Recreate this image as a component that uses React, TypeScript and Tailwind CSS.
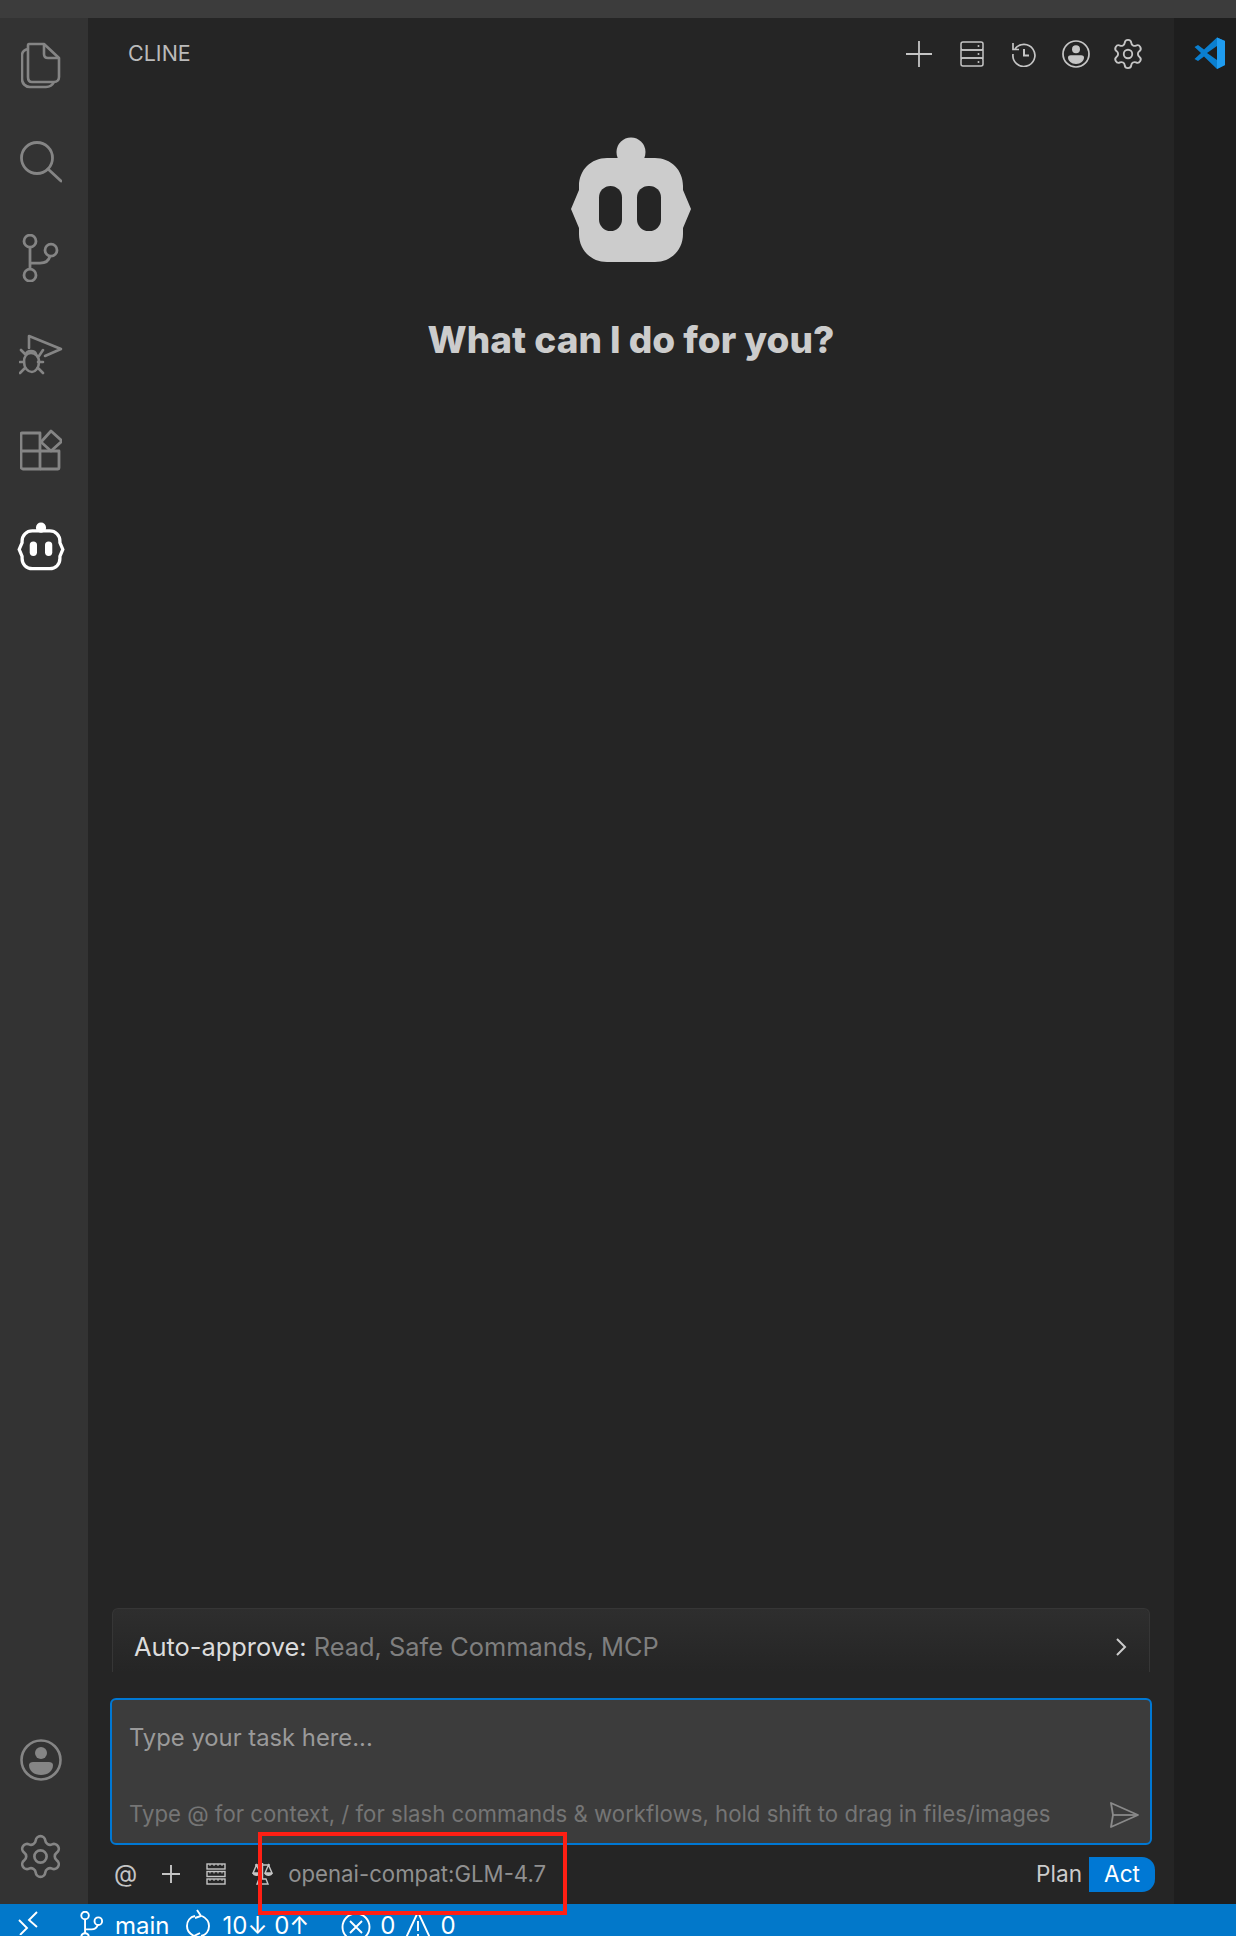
import React from 'react';
import { Settings } from 'lucide-react';

const BOT_PATH =
  'M36 21H84C100 21 112 33 112 49V53L120 72L112 91V97C112 113 100 125 84 125H36C20 125 8 113 8 97V91L0 72L8 53V49C8 33 20 21 36 21Z';

function BotSolid() {
  return (
    <svg width="120" height="125" viewBox="0 0 120 125" className="block">
      <circle cx="60" cy="15" r="14.5" fill="#cccccc" />
      <path d={BOT_PATH} fill="#cccccc" />
      <rect x="28" y="49" width="23" height="45" rx="11.5" fill="#252525" />
      <rect x="66" y="49" width="24" height="45" rx="11.5" fill="#252525" />
    </svg>
  );
}

function BotOutline() {
  return (
    <svg width="48" height="50" viewBox="-6 -2 132 129" className="block">
      <circle cx="60" cy="12" r="14" fill="#ffffff" />
      <path d={BOT_PATH} fill="none" stroke="#ffffff" strokeWidth="9" />
      <rect x="29" y="50" width="20" height="40" rx="10" fill="#ffffff" />
      <rect x="71" y="50" width="20" height="40" rx="10" fill="#ffffff" />
    </svg>
  );
}

function FilesIcon() {
  return (
    <svg width="40" height="50" viewBox="0 0 40 50" fill="none" stroke="#858585" strokeWidth="2.6" className="block">
      <path d="M8 3H23L38 17V36C38 39 36 41 33 41H11C8 41 7 39 7 36V5C7 4 7 3 8 3Z" strokeLinejoin="round" />
      <path d="M23 3V13C23 16 25 17 27 17H38" />
      <path d="M7 8C3 9 1 11 1 14V38C1 42 4 46 9 46H25C28 46 31 45 33 41" />
    </svg>
  );
}

function SearchIcon() {
  return (
    <svg width="42" height="42" viewBox="0 0 42 42" fill="none" stroke="#858585" strokeWidth="2.8" strokeLinecap="round" className="block">
      <ellipse cx="17" cy="17" rx="15.5" ry="15.5" />
      <path d="M28 28L41 40" />
    </svg>
  );
}

function BranchIcon({ color = '#858585', size = 38, sw = 2.8 }: { color?: string; size?: number; sw?: number }) {
  return (
    <svg width={size} height={size * 1.27} viewBox="0 0 38 48" fill="none" stroke={color} strokeWidth={sw} className="block">
      <circle cx="8" cy="7" r="6" />
      <circle cx="8" cy="41" r="6" />
      <circle cx="29" cy="16" r="6" />
      <path d="M8 13V35" />
      <path d="M8 29H18C24 29 27 26 28 22" />
    </svg>
  );
}

function DebugIcon() {
  return (
    <svg width="44" height="42" viewBox="0 0 44 42" fill="none" stroke="#858585" strokeWidth="2.6" strokeLinecap="round" strokeLinejoin="round" className="block">
      <path d="M10 15V3L42 16L26 23" />
      <path d="M11 20C15 20 19 23 19 29C19 35 15 39 12 39C8 39 4 35 4 29C4 23 7 20 11 20Z" transform="translate(1 0)" />
      <path d="M7 21C8 17 16 17 17 21" />
      <path d="M2 17L6 21M24 17L20 23M1 29H5M19 29H24M1 40L6 35M24 40L19 35" />
    </svg>
  );
}

function ExtensionsIcon() {
  return (
    <svg width="42" height="42" viewBox="0 0 42 42" fill="none" stroke="#858585" strokeWidth="2.8" strokeLinejoin="round" className="block">
      <path d="M2 4H20V40H3C2 40 1 39 1 38V5C1 4 2 4 2 4Z" />
      <path d="M1 22H39V39C39 40 38 40 38 40H20" />
      <path d="M21 13L31 2L42 12L31 22Z" />
    </svg>
  );
}

function AccountIcon({ color, size }: { color: string; size: number }) {
  return (
    <svg width={size} height={size} viewBox="0 0 42 42" className="block">
      <circle cx="21" cy="21" r="19.5" fill="none" stroke={color} strokeWidth="2.6" />
      <circle cx="21" cy="14" r="6" fill={color} />
      <path d="M9 26C9 24 11 23 13 23H29C31 23 33 24 33 26C33 32 28 36 21 36C14 36 9 32 9 26Z" fill={color} />
    </svg>
  );
}

function ServerIcon() {
  return (
    <svg width="24" height="26" viewBox="0 0 24 26" fill="none" stroke="#c5c5c5" strokeWidth="1.5" className="block">
      <rect x="1" y="1" width="22" height="8" rx="2" />
      <rect x="1" y="9" width="22" height="8" rx="0" />
      <rect x="1" y="17" width="22" height="8" rx="2" />
      <circle cx="18.5" cy="5" r="1" fill="#c5c5c5" stroke="none" />
      <circle cx="18.5" cy="13" r="1" fill="#c5c5c5" stroke="none" />
      <circle cx="18.5" cy="21" r="1" fill="#c5c5c5" stroke="none" />
    </svg>
  );
}

function HistoryIcon() {
  return (
    <svg width="26" height="26" viewBox="0 0 26 26" fill="none" stroke="#c5c5c5" strokeWidth="1.7" className="block">
      <path d="M4 8A11 11 0 1 1 2 13" />
      <path d="M2 2V8.5H8" />
      <path d="M13 8V14.5H18" strokeWidth="2" />
    </svg>
  );
}

function VsCodeLogo() {
  return (
    <svg width="32" height="32" viewBox="0 0 32 32" className="block">
      <path d="M23 0.5L31 4V28L23 32L10 19.5L4 24L0.5 22L7 16L0.5 10L4 8L10 12.5Z" fill="#0a7fd0" />
      <path d="M23 0.5L31 4V28L23 32Z" fill="#1f9cf0" />
      <path d="M23 9L13 16L23 23Z" fill="#1e1e1e" />
    </svg>
  );
}

function ChevronRight() {
  return (
    <svg width="12" height="20" viewBox="0 0 12 20" fill="none" stroke="#cccccc" strokeWidth="2" className="block">
      <path d="M2 2L10 10L2 18" />
    </svg>
  );
}

function SendIcon() {
  return (
    <svg width="30" height="26" viewBox="0 0 30 26" fill="none" stroke="#8a8a8a" strokeWidth="1.8" strokeLinejoin="round" className="block">
      <path d="M2 1L29 13L2 25L4 13Z" />
      <path d="M4 13H29" />
    </svg>
  );
}

function RackIcon() {
  return (
    <svg width="20" height="22" viewBox="0 0 20 22" fill="none" stroke="#c5c5c5" strokeWidth="1.4" className="block">
      <rect x="1" y="1" width="18" height="5" />
      <rect x="1" y="8.5" width="18" height="5" />
      <rect x="1" y="16" width="18" height="5" />
      <path d="M4 1V3M8 1V3M12 1V3M16 1V3M4 8.5V10.5M8 8.5V10.5M12 8.5V10.5M16 8.5V10.5M4 16V18M8 16V18M12 16V18M16 16V18" strokeWidth="1" />
    </svg>
  );
}

function ScaleIcon() {
  return (
    <svg width="21" height="24" viewBox="0 0 21 24" fill="none" stroke="#c5c5c5" strokeWidth="1.4" className="block">
      <path d="M3 3H18M10.5 1V17M5 22H16L14 17H7Z" />
      <path d="M4.5 3L1 11H8ZM16.5 3L13 11H20Z" />
      <path d="M1 11C2 14 7 14 8 11M13 11C14 14 19 14 20 11" fill="#c5c5c5" />
    </svg>
  );
}

function RemoteIcon() {
  return (
    <svg width="20" height="24" viewBox="0 0 20 24" fill="none" stroke="#ffffff" strokeWidth="1.9" className="block">
      <path d="M1 9L9 17L2 24" />
      <path d="M19 1L11 9L19 16" />
    </svg>
  );
}

function SyncIcon() {
  return (
    <svg width="24" height="32" viewBox="0 0 24 32" fill="none" stroke="#ffffff" strokeWidth="1.9" className="block">
      <path d="M9 7C4 8 1 12 1 17C1 22 4 25 8 27" />
      <path d="M15 27C20 26 23 22 23 17C23 12 20 9 16 7" />
      <path d="M11 1L15 7L9 9" />
      <path d="M13 32L8 27L14 24" />
    </svg>
  );
}

function ErrorIcon() {
  return (
    <svg width="30" height="30" viewBox="0 0 30 30" fill="none" stroke="#ffffff" strokeWidth="1.9" className="block">
      <circle cx="15" cy="15" r="13.5" />
      <path d="M9 9L21 21M21 9L9 21" />
    </svg>
  );
}

function WarningIcon() {
  return (
    <svg width="28" height="30" viewBox="0 0 28 30" fill="none" stroke="#ffffff" strokeWidth="1.9" className="block">
      <path d="M14 1L27 29H1Z" strokeLinejoin="round" />
      <path d="M14 10V20M14 23V26" />
    </svg>
  );
}

function RailSlot({ children }: { children: React.ReactNode }) {
  return <div className="flex h-[96px] w-[88px] items-center justify-center pr-[7px]">{children}</div>;
}

function ActivityBar() {
  return (
    <div className="flex w-[88px] shrink-0 flex-col justify-between bg-[#333333]">
      <div className="flex flex-col">
        <RailSlot><FilesIcon /></RailSlot>
        <RailSlot><SearchIcon /></RailSlot>
        <RailSlot><BranchIcon /></RailSlot>
        <RailSlot><DebugIcon /></RailSlot>
        <RailSlot><ExtensionsIcon /></RailSlot>
        <RailSlot><BotOutline /></RailSlot>
      </div>
      <div className="flex flex-col">
        <RailSlot><AccountIcon color="#858585" size={42} /></RailSlot>
        <RailSlot><Settings size={49} color="#858585" strokeWidth={1.3} /></RailSlot>
      </div>
    </div>
  );
}

function SidebarHeader() {
  return (
    <div className="flex h-[58px] shrink-0 items-center justify-between pt-[13px] pr-[29px] pl-[40px]">
      <span className="text-[21.5px] leading-none text-[#bbbbbb]">CLINE</span>
      <div className="flex items-center">
        <svg width="28" height="28" viewBox="0 0 28 28" stroke="#c5c5c5" strokeWidth="1.8" className="block">
          <path d="M14 1V27M1 14H27" />
        </svg>
        <div className="ml-[27px]"><ServerIcon /></div>
        <div className="ml-[27px]"><HistoryIcon /></div>
        <div className="ml-[25px]"><AccountIcon color="#c5c5c5" size={28} /></div>
        <div className="ml-[21px]"><Settings size={34} color="#c5c5c5" strokeWidth={1.3} /></div>
      </div>
    </div>
  );
}

function Welcome() {
  return (
    <div className="flex flex-1 flex-col items-center pt-[61px]">
      <BotSolid />
      <h1 className="mt-[56px] text-[37px] leading-[44px] font-extrabold text-[#cccccc]">What can I do for you?</h1>
    </div>
  );
}

function AutoApprove() {
  return (
    <div className="mx-[24px] h-[64px] rounded-t-[6px] border-t border-r border-l border-[#363636] bg-gradient-to-b from-[#2e2e2e] to-[#252525]">
      <div className="flex items-center justify-between pt-[23px] pr-[22px] pl-[21px]">
        <span className="text-[25.4px] leading-[30px] text-[#7f7f7f]">
          <span className="text-[#dcdcdc]">Auto-approve: </span>
          Read, Safe Commands, MCP
        </span>
        <ChevronRight />
      </div>
    </div>
  );
}

function TaskInput() {
  return (
    <div className="mx-[22px] mt-[26px] flex h-[147px] flex-col justify-between rounded-[6px] border-2 border-[#0078d4] bg-[#3c3c3c] pt-[22px] pr-[11px] pb-[15px] pl-[17px]">
      <span className="text-[23.8px] leading-[32px] text-[#9a9a9a]">Type your task here...</span>
      <div className="flex items-end justify-between">
        <span className="text-[22.2px] leading-[28px] text-[#757575]">
          Type @ for context, / for slash commands &amp; workflows, hold shift to drag in files/images
        </span>
        <SendIcon />
      </div>
    </div>
  );
}

function Toolbar() {
  return (
    <div className="mt-[5px] flex h-[48px] items-center justify-between pr-[19px] pl-[26px]">
      <div className="flex items-center">
        <span className="text-[24px] leading-none text-[#c5c5c5]">@</span>
        <svg width="18" height="18" viewBox="0 0 18 18" stroke="#c5c5c5" strokeWidth="1.9" className="ml-[25px] block">
          <path d="M9 0V18M0 9H18" />
        </svg>
        <div className="ml-[26px]"><RackIcon /></div>
        <div className="ml-[26px]"><ScaleIcon /></div>
        <span className="ml-[15px] text-[22.2px] leading-none text-[#909090]">openai-compat:GLM-4.7</span>
      </div>
      <div className="flex items-center">
        <span className="text-[22.6px] leading-none text-[#cccccc]">Plan</span>
        <span className="ml-[7px] flex h-[35px] w-[66px] items-center justify-center rounded-r-[13px] bg-[#0078d4] text-[22.6px] text-white">Act</span>
      </div>
    </div>
  );
}

function StatusBar() {
  return (
    <div className="flex h-[32px] shrink-0 items-start overflow-hidden bg-[#0278ca] text-[24px] leading-[32px] text-white">
      <div className="mt-[7px] ml-[18px]"><RemoteIcon /></div>
      <div className="mt-[7px] ml-[42px]"><BranchIcon color="#ffffff" size={24} sw={3} /></div>
      <span className="mt-[6px] ml-[11px]">main</span>
      <div className="mt-[5px] ml-[16px]"><SyncIcon /></div>
      <span className="mt-[6px] ml-[13px]">10↓ 0↑</span>
      <div className="mt-[8px] ml-[32px]"><ErrorIcon /></div>
      <span className="mt-[6px] ml-[9px]">0</span>
      <div className="mt-[7px] ml-[9px]"><WarningIcon /></div>
      <span className="mt-[6px] ml-[8px]">0</span>
    </div>
  );
}

export default function App() {
  return (
    <div className="relative flex h-[1936px] w-[1236px] flex-col overflow-hidden bg-[#252525] font-[Inter,sans-serif]">
      <div className="h-[18px] shrink-0 bg-[#3c3c3c]" />
      <div className="flex min-h-0 flex-1">
        <ActivityBar />
        <div className="flex min-w-0 flex-1 flex-col bg-[#252525]">
          <SidebarHeader />
          <Welcome />
          <AutoApprove />
          <TaskInput />
          <Toolbar />
          <div className="h-[6px]" />
        </div>
        <div className="flex w-[62px] shrink-0 justify-center bg-[#1e1e1e] pt-[19px] pl-[10px]">
          <div><VsCodeLogo /></div>
        </div>
      </div>
      <StatusBar />
      {/* red annotation box drawn over the screenshot */}
      <div className="absolute top-[1832px] left-[258px] h-[83px] w-[309px] border-4 border-[#ff1f14]" />
    </div>
  );
}
